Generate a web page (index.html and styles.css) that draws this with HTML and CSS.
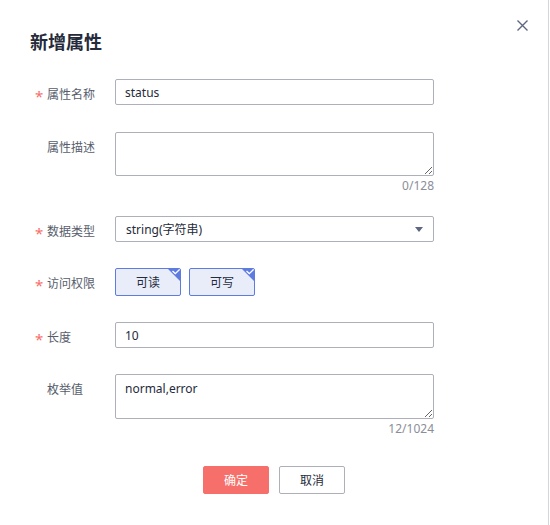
FILE: index.html
```html
<!DOCTYPE html>
<html lang="zh-CN">
<head>
<meta charset="utf-8">
<title>新增属性</title>
<link rel="stylesheet" href="styles.css">
</head>
<body>
<div class="dialog">
  <button class="close" type="button" aria-label="关闭">
    <svg width="11" height="11" viewBox="0 0 11 11"><path d="M0.5 0.5 L10.5 10.5 M10.5 0.5 L0.5 10.5" stroke="#5e6680" stroke-width="1.4" fill="none"/></svg>
  </button>
  <h2 class="title">新增属性</h2>
  <form class="form">
    <div class="row row-input">
      <label class="label"><span class="star">*</span>属性名称</label>
      <div class="control"><input class="input" type="text" value="status"></div>
    </div>
    <div class="row row-area">
      <label class="label"><span class="star"></span>属性描述</label>
      <div class="control">
        <textarea class="textarea"></textarea>
        <div class="counter">0/128</div>
      </div>
    </div>
    <div class="row row-select">
      <label class="label"><span class="star">*</span>数据类型</label>
      <div class="control">
        <div class="select">
          <span>string(字符串)</span>
          <svg width="8" height="5" viewBox="0 0 8 5"><path d="M0 0 H8 L4 5 Z" fill="#5e6680"/></svg>
        </div>
      </div>
    </div>
    <div class="row row-check">
      <label class="label"><span class="star">*</span>访问权限</label>
      <div class="control checks">
        <span class="check">可读<svg class="corner" width="14" height="14" viewBox="0 0 14 14"><path d="M0 0 H14 V14 Z" fill="#5e7ce0"/><path d="M5.5 3 L8.3 5.6 L12.8 1.2" stroke="#fff" stroke-width="1.3" fill="none"/></svg></span>
        <span class="check">可写<svg class="corner" width="14" height="14" viewBox="0 0 14 14"><path d="M0 0 H14 V14 Z" fill="#5e7ce0"/><path d="M5.5 3 L8.3 5.6 L12.8 1.2" stroke="#fff" stroke-width="1.3" fill="none"/></svg></span>
      </div>
    </div>
    <div class="row row-input">
      <label class="label"><span class="star">*</span>长度</label>
      <div class="control"><input class="input" type="text" value="10"></div>
    </div>
    <div class="row row-enum">
      <label class="label"><span class="star"></span>枚举值</label>
      <div class="control">
        <textarea class="textarea tall">normal,error</textarea>
        <div class="counter">12/1024</div>
      </div>
    </div>
    <div class="actions">
      <button type="button" class="btn btn-primary">确定</button>
      <button type="button" class="btn btn-default">取消</button>
    </div>
  </form>
</div>
</body>
</html>
```

FILE: styles.css
```css
html, body {
  margin: 0;
  padding: 0;
  background: #ffffff;
}

body {
  font-family: "Noto Sans", "Noto Sans CJK SC", sans-serif;
  font-size: 12px;
  color: #252b3a;
}

.dialog {
  position: relative;
  width: 549px;
  height: 525px;
  box-sizing: border-box;
  border-right: 1px solid #d4d6db;
  background: #fff;
}

.close {
  position: absolute;
  top: 20px;
  left: 517px;
  width: 11px;
  height: 11px;
  padding: 0;
  border: 0;
  background: transparent;
  display: block;
}

.close svg {
  display: block;
}

.title {
  margin: 0;
  padding: 29px 0 0 30px;
  font-size: 18px;
  line-height: 26px;
  font-weight: bold;
  color: #252b3a;
}

.form {
  margin: 24px 0 0 0;
  padding-left: 35px;
}

.row {
  display: flex;
  align-items: flex-start;
}

.row-input { margin-bottom: 27px; }
.row-area { margin-bottom: 20px; }
.row-select { margin-bottom: 26px; }
.row-check { margin-bottom: 26px; }
.row-input + .row-enum { margin-top: -1px; }
.row-enum { margin-bottom: 27px; }

.label {
  width: 80px;
  height: 26px;
  box-sizing: border-box;
  flex: none;
  display: flex;
  align-items: flex-start;
  padding-top: 6px;
  line-height: 20px;
  color: #575d6c;
  font-size: 12px;
}

.star {
  width: 12px;
  height: 20px;
  box-sizing: border-box;
  flex: none;
  color: #f66f6a;
  font-size: 15px;
  line-height: 20px;
  padding-top: 1px;
}

.control {
  width: 319px;
  flex: none;
}

.input {
  display: block;
  width: 100%;
  height: 26px;
  box-sizing: border-box;
  border: 1px solid #adb0b8;
  border-radius: 2px;
  padding: 0 9px;
  font-family: inherit;
  font-size: 12px;
  color: #252b3a;
  background: #fff;
  outline: none;
}

.textarea {
  display: block;
  width: 100%;
  height: 44px;
  box-sizing: border-box;
  border: 1px solid #adb0b8;
  border-radius: 2px;
  padding: 4px 9px;
  margin: 0;
  font-family: inherit;
  font-size: 12px;
  line-height: 20px;
  color: #252b3a;
  background: #fff;
  resize: vertical;
  outline: none;
}

.textarea.tall {
  height: 45px;
}

.counter {
  text-align: right;
  line-height: 20px;
  color: #8a8e99;
  font-size: 12px;
}

.select {
  height: 26px;
  box-sizing: border-box;
  border: 1px solid #adb0b8;
  border-radius: 2px;
  padding: 0 10px 0 10px;
  display: flex;
  align-items: center;
  justify-content: space-between;
  color: #252b3a;
}

.select svg {
  display: block;
}

.checks {
  display: flex;
  gap: 8px;
}

.check {
  position: relative;
  width: 66px;
  height: 28px;
  box-sizing: border-box;
  border: 1px solid #5e7ce0;
  border-radius: 2px;
  background: #e9edfa;
  display: flex;
  align-items: center;
  justify-content: center;
  color: #252b3a;
  overflow: hidden;
}

.corner {
  position: absolute;
  top: -1px;
  right: -1px;
  display: block;
}

.actions {
  display: flex;
  justify-content: center;
  gap: 10px;
  margin-left: -35px;
}

.btn {
  width: 66px;
  height: 28px;
  box-sizing: border-box;
  border-radius: 2px;
  font-family: inherit;
  font-size: 12px;
  padding: 0;
  cursor: pointer;
}

.btn-primary {
  background: #f66f6a;
  border: 1px solid #f66f6a;
  color: #fff;
}

.btn-default {
  background: #fff;
  border: 1px solid #adb0b8;
  color: #252b3a;
}
```
